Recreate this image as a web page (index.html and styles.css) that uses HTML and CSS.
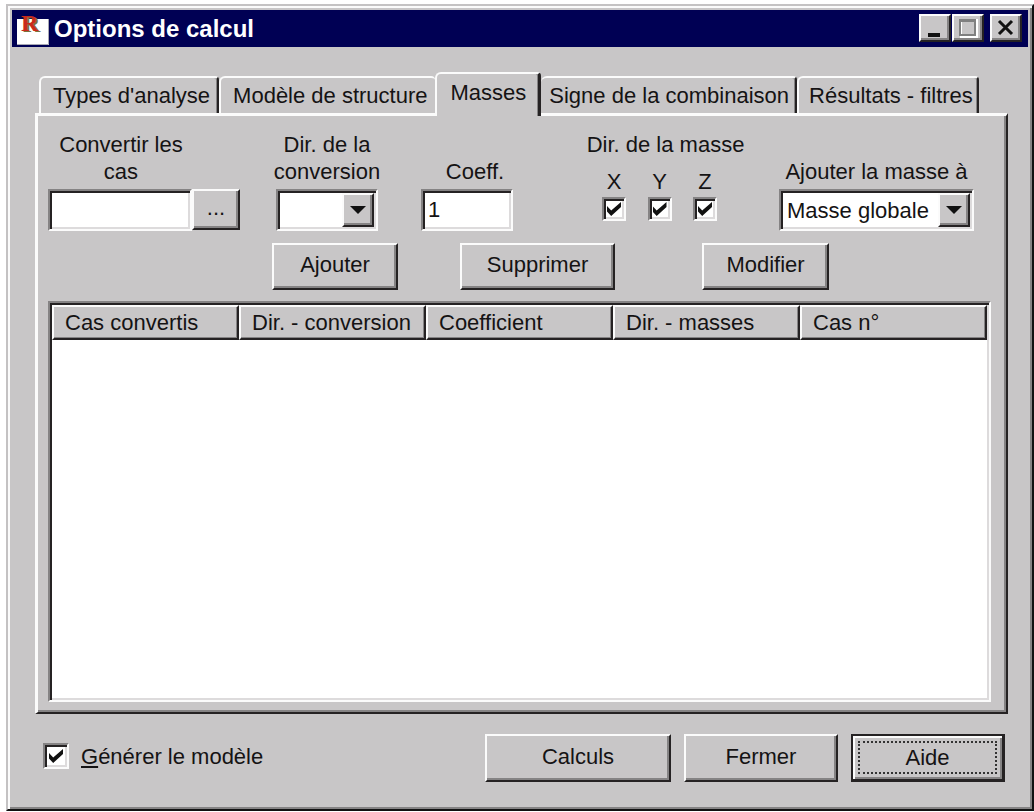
FILE: index.html
```html
<!DOCTYPE html>
<html lang="fr">
<head>
<meta charset="utf-8">
<title>Options de calcul</title>
<link rel="stylesheet" href="styles.css">
</head>
<body>
<main class="window">
  <header class="titlebar">
    <svg class="app-icon" width="32" height="34" viewBox="0 0 32 34" aria-hidden="true">
      <path d="M0 7H32V33H0z" fill="#fff"/>
      <path d="M0 32.500H31.500V7" fill="none" stroke="#a9a9b4"/>
      <text x="6" y="20" class="icon-letter icon-shade">R</text>
      <text x="4" y="19" class="icon-letter">R</text>
    </svg>
    <h1 class="title">Options de calcul</h1>
    <div class="caption-buttons">
      <button class="caption" type="button" aria-label="Réduire"><svg width="24" height="22" viewBox="0 0 24 22"><path d="M5 16H17V20H5z" fill="#111"/></svg></button>
      <button class="caption" type="button" aria-label="Agrandir" disabled><svg width="24" height="22" viewBox="0 0 24 22"><path d="M5 3H21V20H5z" fill="none" stroke="#fff" stroke-width="2"/><path d="M4 3H19V18H4z" fill="none" stroke="#808080" stroke-width="2"/><path d="M3 3.500H20" stroke="#808080" stroke-width="3"/></svg></button>
      <button class="caption caption-close" type="button" aria-label="Fermer la fenêtre"><svg width="24" height="22" viewBox="0 0 24 22"><path d="M5 4L18 17M18 4L5 17" stroke="#111" stroke-width="3"/></svg></button>
    </div>
  </header>

  <div class="content">
    <div class="tabs" role="tablist">
      <button class="tab" type="button" role="tab">Types d'analyse</button>
      <button class="tab tab-second" type="button" role="tab">Modèle de structure</button>
      <button class="tab active" type="button" role="tab" aria-selected="true">Masses</button>
      <button class="tab tab-fourth" type="button" role="tab">Signe de la combinaison</button>
      <button class="tab tab-last" type="button" role="tab">Résultats - filtres</button>
    </div>

    <section class="panel" role="tabpanel">
      <div class="fields">
        <div class="field field-cases">
          <label for="cases">Convertir les<br>cas</label>
          <div class="browse">
            <input class="text" id="cases" type="text">
            <button class="button more" type="button" aria-label="Parcourir">...</button>
          </div>
        </div>
        <div class="field field-direction">
          <label for="direction">Dir. de la<br>conversion</label>
          <div class="combo">
            <select id="direction"><option></option><option>X</option><option>Y</option><option>Z</option></select>
            <span class="arrow"></span>
          </div>
        </div>
        <div class="field field-coeff">
          <label for="coeff">Coeff.</label>
          <input class="text" id="coeff" type="text" value="1">
        </div>
        <div class="field field-mass" role="group" aria-labelledby="mass-label">
          <span id="mass-label">Dir. de la masse</span>
          <div class="axes">
            <label class="axis">X<input class="check" type="checkbox" checked></label>
            <label class="axis">Y<input class="check" type="checkbox" checked></label>
            <label class="axis">Z<input class="check" type="checkbox" checked></label>
          </div>
        </div>
        <div class="field field-target">
          <label for="target">Ajouter la masse à</label>
          <div class="combo">
            <select id="target"><option>Masse globale</option></select>
            <span class="arrow"></span>
          </div>
        </div>
      </div>

      <div class="actions">
        <button class="button add" type="button">Ajouter</button>
        <button class="button remove" type="button">Supprimer</button>
        <button class="button edit" type="button">Modifier</button>
      </div>

      <div class="list">
        <table>
          <thead>
            <tr><th>Cas convertis</th><th>Dir. - conversion</th><th>Coefficient</th><th>Dir. - masses</th><th>Cas n°</th></tr>
          </thead>
          <tbody></tbody>
        </table>
      </div>
    </section>

    <footer class="footer">
      <label class="generate"><input class="check large" type="checkbox" checked><span><u>G</u>énérer le modèle</span></label>
      <div class="commands">
        <button class="button calc" type="button">Calculs</button>
        <button class="button" type="button">Fermer</button>
        <button class="button default" type="button"><span class="focus">Aide</span></button>
      </div>
    </footer>
  </div>
</main>
</body>
</html>
```
FILE: styles.css
```css
:root {
  --face: #c8c6c7;
  --light: #fbfbfb;
  --shade: #858384;
  --dark: #252223;
  --navy: #000054;
}

* {
  box-sizing: border-box;
}

body {
  margin: 0;
  padding: 4px 0 1px 6px;
  min-height: 100vh;
  display: flex;
  background: #fff;
  color: #151314;
  font: 22px/27px "Liberation Sans", Arial, sans-serif;
}

button,
input,
select {
  font: inherit;
  color: inherit;
  margin: 0;
}

.window {
  flex: 1;
  display: flex;
  flex-direction: column;
  background: var(--face);
  border: 2px solid;
  border-color: #c4c2c3 #111 #111 #c4c2c3;
  box-shadow: inset 2px 2px var(--light), inset -2px -2px var(--shade);
  padding: 4px;
}

.titlebar {
  display: flex;
  align-items: center;
  height: 37px;
  padding: 0 6px 0 5px;
  background: var(--navy);
  color: #fff;
}

.app-icon {
  flex: none;
  overflow: visible;
}

.icon-letter {
  font: bold 24px "Liberation Serif", serif;
  fill: #c92a1c;
}

.icon-shade {
  fill: #77733f;
}

.title {
  flex: 1;
  margin: 0 0 0 5px;
  font-size: 24px;
  line-height: 30px;
}

.caption-buttons {
  display: flex;
  gap: 1px;
  margin-bottom: 2px;
}

.caption {
  width: 32px;
  height: 28px;
  padding: 0;
  display: grid;
  place-items: center;
  background: var(--face);
  border: 2px solid;
  border-color: var(--light) var(--dark) var(--dark) var(--light);
  box-shadow: inset -2px -2px var(--shade);
}

.caption-close {
  margin-left: 5px;
}

.content {
  flex: 1;
  display: flex;
  flex-direction: column;
  padding: 25px 20px 23px 23px;
}

.tabs {
  display: flex;
  align-items: flex-end;
  padding-left: 4px;
}

.tab {
  height: 37px;
  padding: 0 7px 0 12px;
  white-space: nowrap;
  background: var(--face);
  border: 2px solid;
  border-color: var(--light) var(--dark) transparent var(--light);
  border-bottom: 0;
  border-radius: 6px 4px 0 0;
  box-shadow: inset -1px 0 var(--shade);
}

.tab-second {
  border-right: 0;
  box-shadow: none;
}

.tab-fourth {
  padding: 0 6px 0 8px;
  border-left: 0;
}

.tab-last {
  padding: 0 4px 0 10px;
}

.tab.active {
  position: relative;
  z-index: 1;
  height: 44px;
  margin-bottom: -3px;
  padding: 0 12px 5px 14px;
  border-right-width: 3px;
}

.panel {
  flex: 1;
  display: flex;
  flex-direction: column;
  border: 3px solid;
  border-color: var(--light) var(--dark) var(--dark) var(--light);
  border-right-width: 2px;
  border-bottom-width: 2px;
  box-shadow: inset -2px -2px var(--shade);
  padding: 15px 15px 10px 10px;
}

.fields {
  display: grid;
  grid-template-columns: 228fr 145fr 167fr 191fr 212fr;
  align-items: end;
}

.field {
  min-width: 0;
  display: flex;
  flex-direction: column;
  align-items: center;
  gap: 4px;
  text-align: center;
  white-space: nowrap;
}

.field-cases {
  padding-right: 36px;
}

.field-direction {
  padding-right: 43px;
}

.field-coeff {
  padding-right: 75px;
}

.field-coeff label {
  padding-left: 16px;
}

.field-mass {
  padding-right: 36px;
  padding-bottom: 10px;
  align-self: stretch;
}

.field-target {
  padding-right: 17px;
}

.field-cases label {
  padding-right: 46px;
}

.text,
.combo select {
  width: 100%;
  min-width: 0;
  height: 42px;
  padding: 0 5px;
  background: #fff;
  border: 2px solid;
  border-color: var(--shade) var(--light) var(--light) var(--shade);
  border-radius: 0;
  box-shadow: inset 2px 2px var(--dark), inset -2px -2px #dddbdc;
  appearance: none;
}

.browse {
  display: flex;
  align-self: stretch;
}

.browse .text {
  flex: 1;
}

.combo {
  position: relative;
  align-self: stretch;
}

.combo select {
  display: block;
  padding: 0 36px 0 6px;
}

.arrow {
  position: absolute;
  top: 4px;
  right: 4px;
  bottom: 4px;
  width: 32px;
  display: grid;
  place-items: center;
  background: var(--face);
  border: 2px solid;
  border-color: var(--light) var(--dark) var(--dark) var(--light);
  box-shadow: inset -2px -2px var(--shade);
  pointer-events: none;
}

.arrow::before {
  content: "";
  border: 8px solid transparent;
  border-top-color: #111;
  border-bottom: 0;
}

.axes {
  align-self: stretch;
  display: flex;
  justify-content: space-between;
  margin-top: auto;
  padding: 0 26px 0 14px;
}

.axis {
  display: flex;
  flex-direction: column;
  align-items: center;
  gap: 3px;
  line-height: 24px;
}

.check {
  appearance: none;
  flex: none;
  width: 24px;
  height: 24px;
  display: grid;
  place-items: center;
  background: #fff;
  border: 2px solid;
  border-color: var(--shade) var(--light) var(--light) var(--shade);
  box-shadow: inset 2px 2px var(--dark), inset -2px -2px #dddbdc;
}

.check.large {
  width: 26px;
  height: 26px;
}

.check:checked::before {
  content: "";
  width: 14px;
  height: 14px;
  background: #111;
  clip-path: polygon(0 28%, 30% 60%, 100% 0, 100% 36%, 30% 100%, 0 68%);
}

.button {
  height: 47px;
  padding: 0 4px 4px;
  background: var(--face);
  border: 2px solid;
  border-color: var(--light) var(--dark) var(--dark) var(--light);
  box-shadow: inset -2px -2px var(--shade);
}

.button.more {
  width: 48px;
  height: 41px;
}

.actions {
  display: grid;
  grid-template-columns: 224fr 126fr 62fr 155fr 87fr 127fr 162fr;
  margin: 12px 0 11px;
}

.add {
  grid-column: 2;
}

.remove {
  grid-column: 4;
}

.edit {
  grid-column: 6;
}

.list {
  flex: 1;
  background: #fff;
  border: 2px solid;
  border-color: var(--shade) var(--light) var(--light) var(--shade);
  box-shadow: inset 2px 2px var(--dark), inset -2px -2px #dddbdc;
  padding: 2px;
}

table {
  width: 100%;
  table-layout: fixed;
  border-collapse: separate;
  border-spacing: 0;
}

th {
  height: 35px;
  padding: 0 0 0 11px;
  text-align: left;
  font-weight: normal;
  white-space: nowrap;
  background: var(--face);
  border: 2px solid;
  border-color: var(--light) var(--dark) var(--dark) var(--light);
  box-shadow: inset -1px -1px var(--shade);
}

.footer {
  display: flex;
  align-items: center;
  justify-content: space-between;
  padding: 20px 3px 0 8px;
}

.generate {
  display: flex;
  align-items: center;
  gap: 12px;
  padding-bottom: 4px;
}

.commands {
  display: flex;
  gap: 13px;
}

.commands .button {
  min-width: 154px;
  height: 48px;
}

.commands .calc {
  min-width: 186px;
}

.commands .default {
  display: flex;
  padding: 5px;
  border-color: var(--dark);
  border-right-width: 3px;
  border-bottom-width: 3px;
  box-shadow: inset 2px 2px var(--light), inset -2px -2px var(--shade);
}

.focus {
  flex: 1;
  align-self: stretch;
  display: grid;
  place-items: center;
  border: 2px dotted #333;
}
```
